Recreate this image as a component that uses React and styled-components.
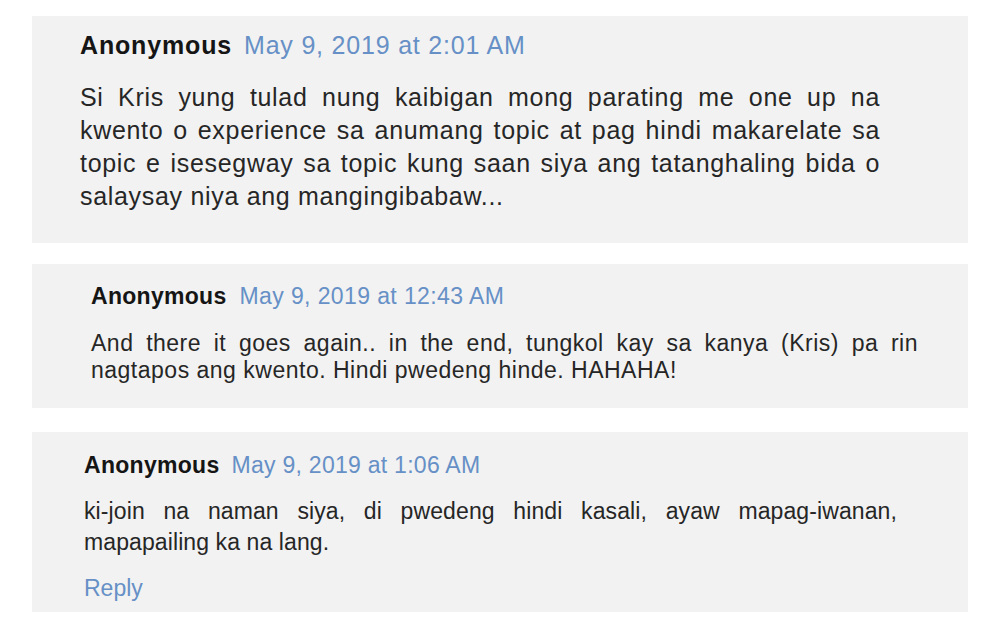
import React from 'react'
import styled, { createGlobalStyle } from 'styled-components'

const GlobalStyle = createGlobalStyle`
    body {
        margin: 0;
        background: #fff;
        font-family: "Liberation Sans", Arial, sans-serif;
    }
`

const Thread = styled.div`
    width: 936px;
    padding: 16px 0 0 32px;
    display: flex;
    flex-direction: column;
`

const Card = styled.div`
    background: #f2f2f2;
    margin-top: ${p => p.$gap || 0}px;
    padding: ${p => p.$pad};
`

const Header = styled.div`
    display: flex;
    align-items: baseline;
    gap: ${p => p.$gap}px;
    font-size: ${p => p.$size}px;
    line-height: ${p => p.$lh}px;
    white-space: nowrap;
`

const Author = styled.span`
    font-weight: bold;
    color: #151515;
    letter-spacing: ${p => p.$ls}px;
`

const Stamp = styled.a`
    color: #6690c6;
    text-decoration: none;
    letter-spacing: ${p => p.$ls}px;
`

const Body = styled.div`
    margin-top: ${p => p.$mt}px;
    width: ${p => p.$width}px;
    font-size: ${p => p.$size}px;
    line-height: ${p => p.$lh}px;
    letter-spacing: ${p => p.$ls}px;
    color: #262626;
`

const Line = styled.span`
    display: block;
    text-align: justify;
    text-align-last: ${p => (p.$last ? 'left' : 'justify')};
`

const ReplyLink = styled.a`
    display: block;
    margin-top: ${p => p.$mt}px;
    font-size: 23px;
    line-height: 27px;
    color: #6690c6;
    text-decoration: none;
`

const comments = [
    {
        date: 'May 9, 2019 at 2:01 AM',
        gap: 0,
        pad: '13px 0 30px 48px',
        head: { size: 25, lh: 33, gap: 12, nameLs: 0.84, dateLs: 0.8 },
        body: { mt: 19, width: 800, size: 25, lh: 33, ls: 0.69 },
        lines: [
            'Si Kris yung tulad nung kaibigan mong parating me one up na',
            'kwento o experience sa anumang topic at pag hindi makarelate sa',
            'topic e isesegway sa topic kung saan siya ang tatanghaling bida o',
            'salaysay niya ang mangingibabaw...',
        ],
    },
    {
        date: 'May 9, 2019 at 12:43 AM',
        gap: 21,
        pad: '19px 0 24px 59px',
        head: { size: 23, lh: 27, gap: 13, nameLs: 0.29, dateLs: 0.39 },
        body: { mt: 20, width: 827, size: 23, lh: 27, ls: 0.5 },
        lines: [
            'And there it goes again.. in the end, tungkol kay sa kanya (Kris) pa rin',
            'nagtapos ang kwento. Hindi pwedeng hinde. HAHAHA!',
        ],
    },
    {
        date: 'May 9, 2019 at 1:06 AM',
        gap: 24,
        pad: '20px 0 10px 52px',
        head: { size: 23, lh: 27, gap: 12, nameLs: 0.29, dateLs: 0.27 },
        body: { mt: 17, width: 813, size: 23, lh: 31, ls: 0.1 },
        lines: [
            'ki-join na naman siya, di pwedeng hindi kasali, ayaw mapag-iwanan,',
            'mapapailing ka na lang.',
        ],
        reply: true,
    },
]

const Comment = ({ c }) => (
    <Card $gap={c.gap} $pad={c.pad}>
        <Header $size={c.head.size} $lh={c.head.lh} $gap={c.head.gap}>
            <Author $ls={c.head.nameLs}>Anonymous</Author>
            <Stamp href="#" $ls={c.head.dateLs}>{c.date}</Stamp>
        </Header>
        <Body $mt={c.body.mt} $width={c.body.width} $size={c.body.size} $lh={c.body.lh} $ls={c.body.ls}>
            {c.lines.map((l, i) => (
                <Line key={i} $last={i === c.lines.length - 1}>{l}</Line>
            ))}
        </Body>
        {c.reply && <ReplyLink href="#" $mt={17}>Reply</ReplyLink>}
    </Card>
)

const App = () => (
    <>
        <GlobalStyle />
        <Thread>
            {comments.map((c, i) => <Comment key={i} c={c} />)}
        </Thread>
    </>
)

export default App
